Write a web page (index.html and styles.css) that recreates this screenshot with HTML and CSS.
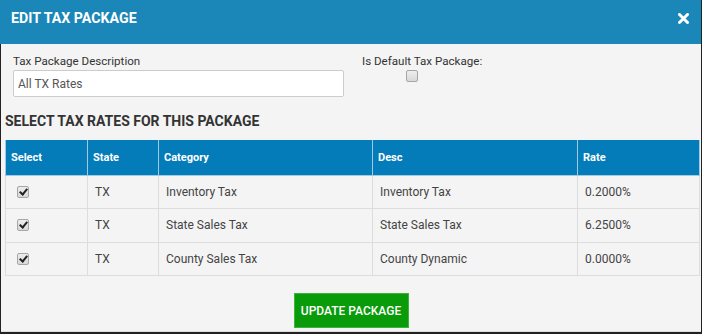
FILE: index.html
```html
<!DOCTYPE html>
<html lang="en">
<head>
<meta charset="UTF-8">
<link rel="stylesheet" href="styles.css">
<title>Edit Tax Package</title>
</head>
<body>
<div class="modal">
  <div class="modal-header">
    <h2 class="modal-title">Edit Tax Package</h2>
    <button class="close-btn" aria-label="Close">
      <svg width="11" height="11" viewBox="0 0 11 11"><path d="M1.5 1.5 L9.5 9.5 M9.5 1.5 L1.5 9.5" stroke="#fff" stroke-width="3" stroke-linecap="round"/></svg>
    </button>
  </div>

  <div class="modal-body">
    <div class="form-row">
      <div class="field desc-field">
        <label for="desc">Tax Package Description</label>
        <input type="text" id="desc" value="All TX Rates">
      </div>
      <div class="field default-field">
        <label for="isdefault">Is Default Tax Package:</label>
        <input type="checkbox" id="isdefault" class="chk">
      </div>
    </div>

    <h3 class="section-title">Select Tax Rates For This Package</h3>

    <table class="rates">
      <thead>
        <tr>
          <th class="col-select">Select</th>
          <th class="col-state">State</th>
          <th class="col-cat">Category</th>
          <th class="col-desc">Desc</th>
          <th>Rate</th>
        </tr>
      </thead>
      <tbody>
        <tr>
          <td><input type="checkbox" class="chk" checked></td>
          <td>TX</td>
          <td>Inventory Tax</td>
          <td>Inventory Tax</td>
          <td>0.2000%</td>
        </tr>
        <tr>
          <td><input type="checkbox" class="chk" checked></td>
          <td>TX</td>
          <td>State Sales Tax</td>
          <td>State Sales Tax</td>
          <td>6.2500%</td>
        </tr>
        <tr>
          <td><input type="checkbox" class="chk" checked></td>
          <td>TX</td>
          <td>County Sales Tax</td>
          <td>County Dynamic</td>
          <td>0.0000%</td>
        </tr>
      </tbody>
    </table>

    <div class="actions">
      <button class="btn-update">Update Package</button>
    </div>
  </div>
</div>
</body>
</html>
```

FILE: styles.css
```css
* {
    box-sizing: border-box;
}

body {
    margin: 0;
    font-family: Roboto, "Liberation Sans", Arial, sans-serif;
    color: #333;
}

.modal {
    width: 702px;
    height: 334px;
    background-color: #f4f4f4;
    border-left: 1px solid #222;
    border-right: 1px solid #222;
    border-bottom: 2px solid #222;
    display: flex;
    flex-direction: column;
}

.modal-header {
    background-color: #1b87b8;
    height: 44px;
    display: flex;
    justify-content: space-between;
    align-items: flex-start;
    padding: 10px 12px 0 11px;
    margin-left: -1px;
}

.modal-title {
    margin: 0;
    color: #fff;
    font-size: 14.2px;
    font-weight: 700;
    line-height: 17px;
    text-transform: uppercase;
}

.close-btn {
    background: none;
    border: none;
    padding: 0;
    margin-top: 3px;
    cursor: pointer;
    line-height: 0;
}

.modal-body {
    flex: 1;
    padding: 10px 0 0 4px;
    border-bottom: 1px solid #ddd;
}

.form-row {
    display: flex;
}

.field label {
    display: block;
    font-size: 11.6px;
    line-height: 14px;
    color: #333;
    margin-bottom: 2px;
}

.desc-field {
    width: 331px;
    margin-left: 8px;
}

.desc-field input {
    width: 100%;
    height: 27px;
    border: 1px solid #ccc;
    border-radius: 2px;
    background: #fff;
    padding: 0 4px;
    font-family: inherit;
    font-size: 12px;
    color: #555;
}

.default-field {
    margin-left: 18px;
}

/* grey checkbox like the old browser look */
.chk {
    appearance: none;
    -webkit-appearance: none;
    position: relative;
    width: 12px;
    height: 12px;
    border: 1px solid #a6a6a6;
    border-radius: 2px;
    background: linear-gradient(#ededed, #d8d8d8);
    vertical-align: middle;
}

.chk:checked::after {
    content: "";
    position: absolute;
    left: 3px;
    top: 0px;
    width: 3px;
    height: 6px;
    border: solid #222;
    border-width: 0 2px 2px 0;
    transform: rotate(40deg);
}

.default-field .chk {
    margin: 1px 0 0 44px;
    display: block;
}

.section-title {
    margin: 16px 0 10px 0;
    font-size: 14px;
    line-height: 17px;
    font-weight: 700;
    text-transform: uppercase;
    color: #333;
}

.rates {
    width: 695px;
    border-collapse: collapse;
    font-size: 12px;
}

.rates th {
    background-color: #037cb9;
    color: #fff;
    font-weight: 700;
    font-size: 11px;
    text-align: left;
    height: 35px;
    padding: 0 5px;
    border: 1px solid #9fcbe2;
    border-top: none;
}

.rates td {
    height: 33.5px;
    padding: 0 7px;
    border: 1px solid #ddd;
    color: #444;
}

.rates td .chk {
    margin: 0 0 1px 4px;
}

.col-select { width: 82px; }
.col-state { width: 71px; }
.col-cat { width: 214px; }
.col-desc { width: 205px; }

.actions {
    display: flex;
    justify-content: center;
    padding-top: 17px;
    margin-left: -4px;
}

.btn-update {
    background-color: #0a9b0a;
    border: 1px solid #3cb43c;
    color: #fff;
    font-family: inherit;
    font-size: 12px;
    font-weight: 500;
    text-transform: uppercase;
    height: 35px;
    width: 115px;
    padding: 0;
}
```
